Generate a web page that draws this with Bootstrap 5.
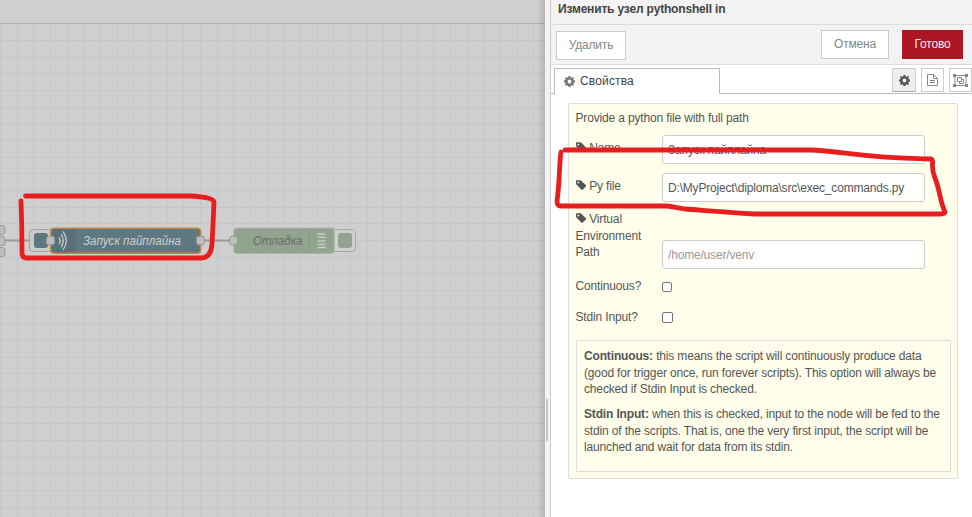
<!DOCTYPE html>
<html lang="ru">
<head>
<meta charset="utf-8">
<title>Node-RED</title>
<link href="https://cdn.jsdelivr.net/npm/bootstrap@5.3.0/dist/css/bootstrap.min.css" rel="stylesheet">
<style>
body{width:972px;height:517px;font-family:"Liberation Sans",Arial,sans-serif;font-size:12px;letter-spacing:-.155px;line-height:16.6px;color:#555;background:#fff}
.workspace{width:545px;background:#cfcfcf}
.ws-tabs{height:24px;border-bottom:1px solid #b2b2b2}
.ws-shade{width:8px;top:0;right:0;background:linear-gradient(90deg,transparent,rgba(0,0,0,.12))}
.splitter{width:6px;background:#f3f3f3;border-right:1px solid #ccc}
.grip{width:2px;height:42px;margin:399px 0 0 1px;background:#c8c8c8}
.tray-title{height:25px;background:#f3f3f3;border-bottom:1px solid #dcdcdc;color:#444;padding:1px 0 0 7px;letter-spacing:-.18px}
.tray-bar{height:40px;background:#f3f3f3;border-bottom:1px solid #dcdcdc;padding:5px 9px 0 5px}
.tray-bar .btn{--bs-btn-font-size:12px;--bs-btn-line-height:16px;--bs-btn-padding-x:0;--bs-btn-padding-y:0;--bs-btn-border-radius:0;--bs-btn-color:#888;--bs-btn-bg:#fff;--bs-btn-border-color:#ccc;height:29px;letter-spacing:-.2px}
.tray-bar .btn-done{--bs-btn-color:#eee;--bs-btn-bg:#ad1625;--bs-btn-border-color:#ad1625;width:61px;padding-bottom:1px}
.tray-bar .btn-del{width:70px;margin-top:1px;padding-bottom:1px}
.tray-bar .btn-cancel{width:68px;margin-right:13px;padding-bottom:1px}
.tab-row{height:29px;padding:3px 0 0 3px;border-bottom:1px solid #bbb}
.tab-main{width:166px;height:26px;border:1px solid #bbb;border-bottom:0;background:#fff;color:#444;padding-left:10px;letter-spacing:.15px}
.tab-main svg{margin:0 0 1px -1px}
.tab-main span{margin-left:1px}
.tab-tools{gap:5px}
.tab-tool{height:24px;width:23px;border:1px solid #ccc;background:#fff}
.tab-tool.on{width:24px;background:#eee;border-bottom-color:#aaa}
.form-area{width:390px;height:376px;margin:9px 0 0 17px;background:#ffffec;border:1px solid #dcdcdc;border-radius:2px;padding:6px 7px 0 6.5px}
.intro{height:25px}
.field-row{height:28.5px}
.field-row label{padding-bottom:1px}
.field-row + .field-row{margin-top:9.500px}
.field-row + .venv-row{height:57.500px}
.check-row{height:35px}
.check-row + .check-row{height:27px;margin-bottom:9.500px}
.field-label{width:86.500px;flex:none}
.field-label svg{display:inline-block;vertical-align:-1px;margin-right:-.5px}
.form-area .form-control{width:263px;height:28.5px;font-size:12px;letter-spacing:-.18px;line-height:16px;padding:1px 5px 0;border-color:#ccc;border-radius:3px;color:#555}
.form-area .form-control::placeholder{color:#999}
.form-area .form-check-input{width:10px;height:10px;margin:1px 0 0;border:1px solid #767676;border-radius:2px;background:#fff}
.form-area .check-row + .check-row .form-check-input{width:11px;height:11px}
.tips{height:132px;width:375px;border:1px solid #dcdcdc;border-radius:1px;padding:7px 0 0 7.5px}
.tips p{margin:0 0 8.3px;white-space:nowrap}
.node-text{font:italic 12.3px "Liberation Sans",Arial,sans-serif;letter-spacing:0}
svg{flex:none}
</style>
<script src="https://cdn.jsdelivr.net/npm/bootstrap@5.3.0/dist/js/bootstrap.bundle.min.js"></script>
</head>
<body class="position-relative overflow-hidden d-flex">
<svg class="d-none">
<symbol id="gear" viewBox="0 0 16 16"><path fill-rule="evenodd" d="M6.500 0h3l.4 2.100 1.300.6L13 1.400 14.700 3.100 13.500 4.900l.5 1.300 2 .4v2.800l-2 .4-.5 1.300 1.200 1.800-1.800 1.800-1.800-1.200-1.300.5-.3 2h-3l-.4-2-1.200-.5-1.800 1.200-1.800-1.800 1.200-1.800L2 9.800 0 9.400V6.600l2-.4.5-1.300-1.200-1.800L3.100 1.400l1.800 1.300 1.200-.6zM8 5.200a2.800 2.800 0 1 0 0 5.600 2.800 2.800 0 0 0 0-5.600z"/></symbol>
<symbol id="tag" viewBox="0 0 12 12"><path fill-rule="evenodd" d="M0 1.200Q0 .3.900.3H4.600Q5.400.3 6.100 1L10.800 5.800Q11.300 6.400 10.800 7L7.200 10.700Q6.600 11.200 6 10.700L.7 5.300Q0 4.600 0 3.900zM2.500 1.800a1 1 0 1 0 0 2 1 1 0 0 0 0-2z"/></symbol>
</svg>

<main class="workspace position-relative d-flex flex-column flex-shrink-0">
<div class="ws-tabs"></div>
<svg width="545" height="493" viewBox="0 24 545 493">
<defs><pattern id="grid" width="50" height="50" patternUnits="userSpaceOnUse" y="-10"><path d="M.5 0V50M17.500 0V50M33.500 0V50M0 .5H50M0 17.500H50M0 33.500H50" stroke="#c7c7c7"/></pattern></defs>
<rect y="24" width="545" height="493" fill="url(#grid)"/>
<path d="M0 240.500H50M201 240.500H233" stroke="#999" stroke-width="2.200"/>
<g fill="#bdbdbd" stroke="#999"><rect x="-4" y="225.500" width="9" height="9" rx="2.500"/><rect x="-4" y="236.500" width="9" height="9" rx="2.500"/><rect x="-4" y="247.500" width="9" height="9" rx="2.500"/></g>
<rect x="29.500" y="229.500" width="27" height="22" rx="3.500" fill="#cacaca" stroke="#a3a3a3"/>
<rect x="34" y="233" width="14" height="15" rx="3" fill="#5f7780"/>
<rect x="50.700" y="228.200" width="150" height="25" rx="3.500" fill="#5f7780" stroke="#c78544" stroke-width="1.600"/>
<path d="M51.500 229H75.500V252.500H51.500z" fill="#000" opacity=".05"/><path d="M75.500 229V252.500" stroke="#5a7079"/>
<g fill="none" stroke="#d0d0d0" stroke-width="1.200" stroke-linecap="round"><path d="M59.300 237.500Q61 240.600 59.300 243.700M61.400 234.500Q65 240.500 61.400 246.500M63.300 231.800Q69.200 240.500 63.300 249.500"/></g>
<text class="node-text" x="83" y="244.700" fill="#d0d0d0" textLength="98" lengthAdjust="spacingAndGlyphs">Запуск пайплайна</text>
<rect x="329.500" y="229.500" width="26" height="22" rx="3.500" fill="#cfcfcf" stroke="#aaa"/>
<rect x="338" y="233" width="14" height="15" rx="3" fill="#92a38f"/>
<rect x="234" y="228.200" width="100" height="25" rx="3" fill="#92a38f" stroke="#a0a99e"/>
<path d="M309.500 228.500V252.500" stroke="#879785"/>
<path d="M317.500 234H325.500M317.500 237.300H325.500M317.500 240.800H325.500M317.500 244.300H325.500M317.500 247.500H325.500" stroke="#ccd2ca" stroke-width="1.300"/>
<text class="node-text" x="253" y="244.700" fill="#666d64" textLength="49.500" lengthAdjust="spacingAndGlyphs">Отладка</text>
<g fill="#bdbdbd" stroke="#999"><rect x="46.500" y="236.300" width="8" height="8.500" rx="2.500"/><rect x="196.500" y="236.300" width="8" height="8.500" rx="2.500"/><rect x="229.500" y="236.300" width="8" height="8.500" rx="2.500"/></g>
</svg>
<div class="ws-shade position-absolute h-100"></div>
</main>
<div class="splitter flex-shrink-0"><div class="grip"></div></div>

<aside class="flex-grow-1">
<div class="tray-title fw-bold">Изменить узел pythonshell in</div>
<div class="tray-bar d-flex">
<button class="btn btn-del">Удалить</button>
<button class="btn btn-cancel ms-auto">Отмена</button>
<button class="btn btn-done">Готово</button>
</div>
<div class="tab-row d-flex">
<div class="tab-main d-flex align-items-center gap-1"><svg width="11" height="11" fill="#777"><use href="#gear"/></svg><span>Свойства</span></div>
<div class="tab-tools d-flex ms-auto">
<div class="tab-tool on d-flex align-items-center justify-content-center"><svg width="11" height="11" fill="#555"><use href="#gear"/></svg></div>
<div class="tab-tool d-flex align-items-center justify-content-center"><svg width="11" height="12" viewBox="0 0 11 12" fill="none" stroke="#888"><path d="M.5.5H6.500L10.500 4.500V11.500H.5zM6.500.5V4.500H10.500M3 6.500H8M3 8.500H8"/></svg></div>
<div class="tab-tool d-flex align-items-center justify-content-center"><svg width="15" height="13" viewBox="0 0 15 13" fill="none" stroke="#888"><path d="M2 1.500H13V11.500H2zM4.500 3.500H8.500V7.500H4.500zM8.500 5.500H10.500V9.500H6.500V7.500"/><path fill="#888" stroke="none" d="M0 0H3V3H0zM12 0H15V3H12zM0 10H3V13H0zM12 10H15V13H12z"/></svg></div>
</div>
</div>
<div class="form-area">
<div class="intro">Provide a python file with full path</div>
<div class="field-row d-flex align-items-center"><label class="field-label"><svg width="11" height="11" fill="#555"><use href="#tag"/></svg> Name</label><input class="form-control" value="Запуск пайплайна"></div>
<div class="field-row d-flex align-items-center"><label class="field-label"><svg width="11" height="11" fill="#555"><use href="#tag"/></svg> Py file</label><input class="form-control" value="D:\MyProject\diploma\src\exec_commands.py"></div>
<div class="field-row venv-row d-flex"><label class="field-label pe-3"><svg width="11" height="11" fill="#555"><use href="#tag"/></svg> Virtual Environment Path</label><input class="form-control align-self-end" placeholder="/home/user/venv"></div>
<div class="check-row d-flex align-items-center"><label class="field-label">Continuous?</label><input type="checkbox" class="form-check-input"></div>
<div class="check-row d-flex align-items-center"><label class="field-label">Stdin Input?</label><input type="checkbox" class="form-check-input"></div>
<div class="tips">
<p><b>Continuous:</b> this means the script will continuously produce data<br>(good for trigger once, run forever scripts). This option will always be<br>checked if Stdin Input is checked.</p>
<p><b>Stdin Input:</b> when this is checked, input to the node will be fed to the<br>stdin of the scripts. That is, one the very first input, the script will be<br>launched and wait for data from its stdin.</p>
</div>
</div>
</aside>

<svg class="position-absolute top-0 start-0 pe-none" width="972" height="517" fill="none" stroke="#e81e1e" stroke-width="4.800" stroke-linecap="round" stroke-linejoin="round">
<path d="M25.500 196H190Q213 197 214 202Q213 225 212 244Q211 258 201 258H27Q22 258 22 253Q22 226 21 201"/>
<path d="M565 150H812C850 152 860 158 931 159Q933 160 932.500 164Q932 171 935 178C940 190 940 202 945 212Q945 214 940 214H755C720 212 700 210 685 209C672 207 672 206 665 206H561Q557 206 557 201C560 180 559 165 561 152"/>
</svg>
</body>
</html>
